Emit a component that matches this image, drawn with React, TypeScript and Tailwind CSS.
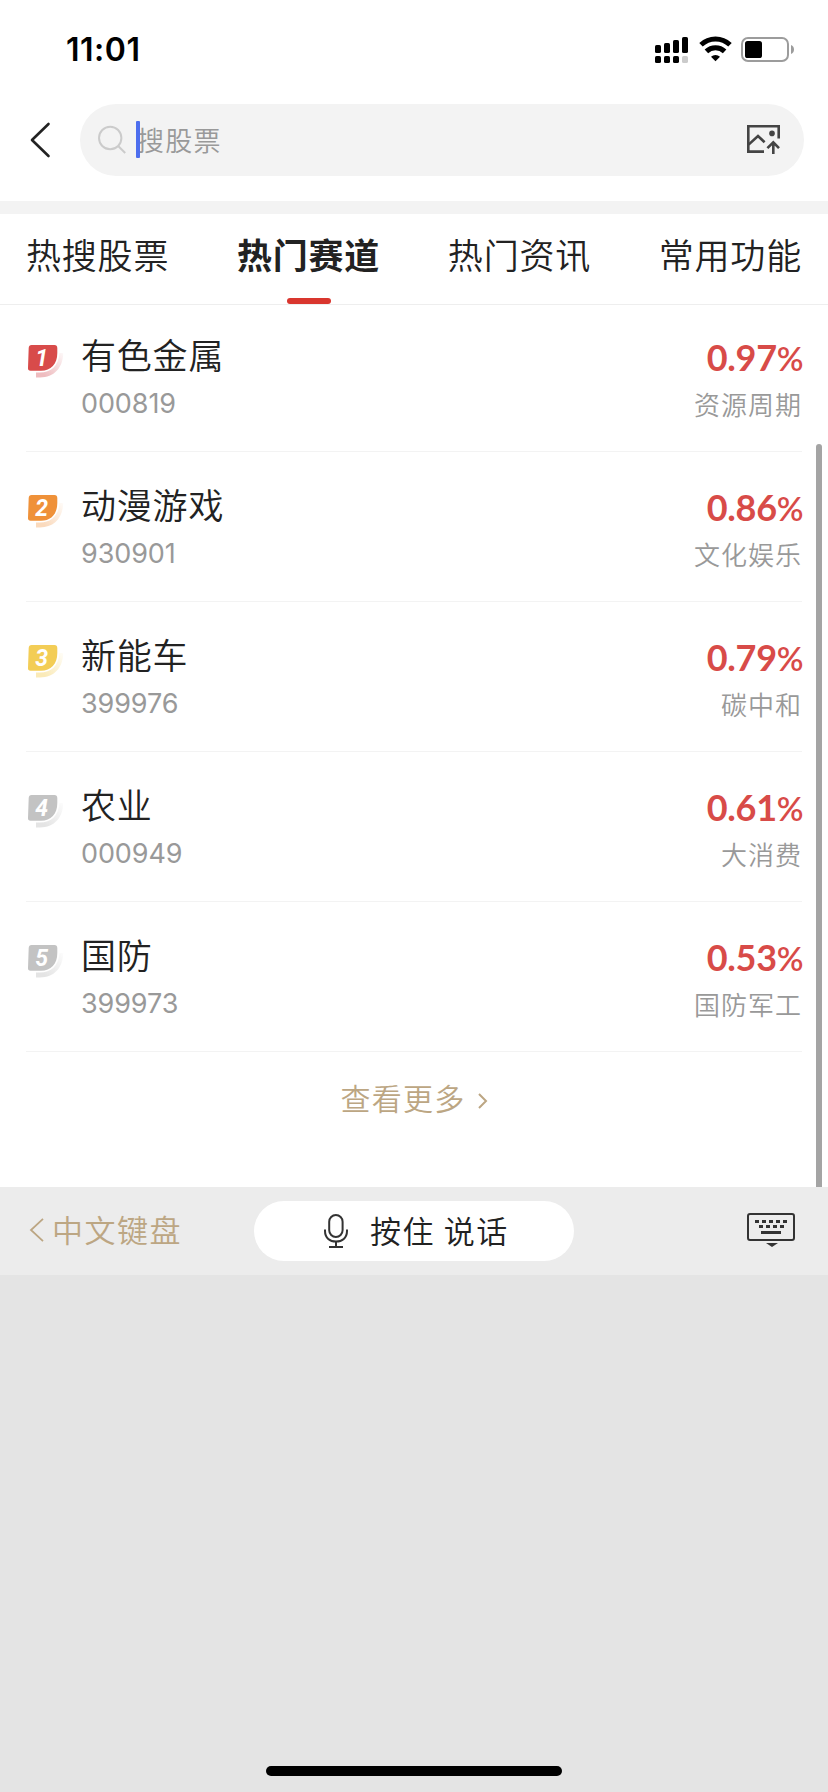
type Track = {
    name: string;
    code: string;
    change: string;
    sector: string;
    color: string;
    tail: string;
};

const tabs = ["热搜股票", "热门赛道", "热门资讯", "常用功能"];

const tracks: Track[] = [
    { name: "有色金属", code: "000819", change: "0.97", sector: "资源周期", color: "#d84b4a", tail: "#eebcbf" },
    { name: "动漫游戏", code: "930901", change: "0.86", sector: "文化娱乐", color: "#ef9139", tail: "#fadabd" },
    { name: "新能车", code: "399976", change: "0.79", sector: "碳中和", color: "#f3cd56", tail: "#faeab8" },
    { name: "农业", code: "000949", change: "0.61", sector: "大消费", color: "#c3c3c3", tail: "#e4e4e4" },
    { name: "国防", code: "399973", change: "0.53", sector: "国防军工", color: "#c3c3c3", tail: "#e4e4e4" },
];

const StatusBar = () => {
    return (
        <div className="flex h-[104px] items-start justify-between pl-[66px] pr-[34px]">
            <span className="mt-[30px] font-['Inter'] text-[32px] font-semibold leading-[40px] tracking-[0.5px] text-black">11:01</span>
            <svg className="mt-[36px]" width="140" height="28" viewBox="654 36 140 28">
                <rect x="655" y="45" width="6" height="8" rx="1.6" />
                <rect x="664" y="43" width="6" height="10" rx="1.6" />
                <rect x="673" y="40" width="6" height="13" rx="1.6" />
                <rect x="682" y="37" width="6" height="16" rx="1.6" />
                <rect x="655" y="56" width="6" height="7" rx="1.6" />
                <rect x="664" y="56" width="6" height="7" rx="1.6" />
                <rect x="673" y="56" width="6" height="7" rx="1.6" />
                <rect x="682" y="56" width="6" height="7" rx="1.6" fill="#cbcbcb" />
                <path d="M701 44.8 A21 21 0 0 1 730 44.8" fill="none" stroke="#000" strokeWidth="5" />
                <path d="M706.4 51.4 A13 13 0 0 1 724.6 51.4" fill="none" stroke="#000" strokeWidth="5" />
                <path d="M711 56.8 A6.4 6.4 0 0 1 720 56.8 L715.5 61.2 Z" />
                <rect x="742" y="38" width="46" height="23" rx="6" fill="none" stroke="#9c9c9c" strokeWidth="2" />
                <rect x="745" y="41" width="17" height="17" rx="2.6" />
                <path d="M791 45 C795 46.5 795 52.5 791 54 Z" fill="#9c9c9c" />
            </svg>
        </div>
    );
};

const SearchBar = () => {
    return (
        <div className="flex h-[72px] items-center pl-[28px] pr-6">
            <svg width="24" height="40" viewBox="0 0 24 40" fill="none" stroke="#222" strokeWidth="2.6" strokeLinecap="round" strokeLinejoin="round">
                <path d="M20.5 4 L4 20 L20.5 36" />
            </svg>
            <div className="ml-7 flex h-full flex-1 items-center rounded-full bg-[#f3f3f3] pl-[17px] pr-[23px]">
                <svg width="30" height="30" viewBox="0 0 30 30" fill="none" stroke="#cbcbcb" strokeWidth="2">
                    <circle cx="13.2" cy="13" r="11.2" />
                    <path d="M21.4 21.2 L28.2 28" />
                </svg>
                <span className="z-10 -mt-[2px] ml-[9px] h-[37px] w-1 rounded-[1px] bg-[#4d6eee]" />
                <span className="-ml-[3px] text-[27px] font-[350] leading-[40px] tracking-[1.3px] text-[#999]">搜股票</span>
                <svg className="ml-auto" width="35" height="32" viewBox="746 124 35 32" fill="none" stroke="#444" strokeWidth="2.6">
                    <path d="M778.7 138.6 V126.3 H748.3 V151.6 H764" />
                    <path d="M748.6 144.6 L758 136 L764.6 142.2" />
                    <circle cx="772" cy="133.4" r="2.8" fill="#444" stroke="none" />
                    <path d="M773.3 154 V143 M767.4 148.2 L773.3 142.3 L779 148.2" />
                </svg>
            </div>
        </div>
    );
};

const RankBadge = ({ rank, color, tail }: { rank: number; color: string; tail: string }) => {
    return (
        <svg className="mt-[42px]" width="40" height="36" viewBox="0 0 40 36">
            <defs>
                <linearGradient id={`tail-${rank}`} x1="0" y1="1" x2="1" y2="0">
                    <stop offset="0.2" stopColor={tail} />
                    <stop offset="1" stopColor={tail} stopOpacity="0.1" />
                </linearGradient>
            </defs>
            <path d="M10 28.5 H14 C25 28.5 32.5 22 33.5 9 H37.2 C37 24 28 33.4 14 33.4 H10 Z" fill={`url(#tail-${rank})`} />
            <path d="M5.6 1 H28.4 Q31.3 1 31.3 4 V9 C31.3 20 25 26.8 15 26.8 H4.6 Q1.8 26.8 2 24 L2.7 4 Q2.8 1 5.6 1 Z" fill={color} />
            <text x="15.6" y="21.6" textAnchor="middle" fill="#fff" className="font-['Roboto'] text-[23px] font-bold italic">{rank}</text>
        </svg>
    );
};

const TrackRow = ({ track, rank }: { track: Track; rank: number }) => {
    return (
        <div className="mx-[26px] flex h-[150px] border-b border-[#f3f3f3]">
            <RankBadge rank={rank} color={track.color} tail={track.tail} />
            <div className="ml-[15px] flex flex-col">
                <span className="mt-[28px] text-[35px] font-[350] leading-[48px] tracking-[0.8px] text-[#222]">{track.name}</span>
                <span className="mt-[9px] font-['Inter'] text-[27px] leading-[34px] tracking-[-0.1px] text-[#999]">{track.code}</span>
            </div>
            <div className="ml-auto flex flex-col items-end">
                <span className="-mr-[1px] mt-[32px] font-['Lato'] text-[36px] font-bold leading-[46px] tracking-[-0.3px] text-[#d84b48]">
                    {track.change}
                    <span className="text-[33px] font-semibold tracking-[-0.5px]">%</span>
                </span>
                <span className="mt-1 text-[26px] font-[350] leading-[38px] tracking-[1px] text-[#999]">{track.sector}</span>
            </div>
        </div>
    );
};

const KeyboardBar = () => {
    return (
        <div className="flex h-[88px] items-center bg-[#ececec] pl-[28px] pr-8">
            <div className="flex w-[226px] items-center text-[#bca683]">
                <svg className="-mt-[3px]" width="18" height="28" viewBox="0 0 18 28" fill="none" stroke="currentColor" strokeWidth="1.8">
                    <path d="M15 2.8 L3 14 L15 25.2" />
                </svg>
                <span className="-mt-1 ml-[6px] text-[31px] font-[350] leading-[44px] tracking-[1.5px]">中文键盘</span>
            </div>
            <div className="flex h-[60px] w-[320px] items-center rounded-full bg-white pl-[69px]">
                <svg width="26" height="36" viewBox="0 0 26 36" fill="none" stroke="#333" strokeWidth="2">
                    <rect x="6.2" y="2" width="13.4" height="22" rx="6.7" />
                    <path d="M2 16.5 V18 C2 25 7 28.6 13 28.6 S24 25 24 18 V16.5 M13 28.6 V34 M6 34 H20" />
                </svg>
                <span className="-mt-[3px] ml-[21px] text-[31px] font-[350] leading-[44px] tracking-[1.6px] text-[#222]">按住 说话</span>
            </div>
            <svg className="-mt-[3px] ml-auto" width="50" height="36" viewBox="745 1212 50 36" fill="none">
                <rect x="747" y="1214" width="46" height="26" rx="2" stroke="#333" strokeWidth="2" />
                <path d="M754 1221.5 H787" stroke="#333" strokeWidth="3" strokeDasharray="4 3" />
                <path d="M758 1226.5 H784" stroke="#333" strokeWidth="3" strokeDasharray="4 3" />
                <path d="M760 1232.5 H780" stroke="#333" strokeWidth="3" />
                <path d="M765 1243 H777 L771 1247 Z" fill="#333" />
            </svg>
        </div>
    );
};

const App = () => {
    return (
        <div className="relative flex h-[1792px] w-[828px] flex-col overflow-hidden bg-white font-['Noto_Sans_CJK_SC',sans-serif]">
            <StatusBar />
            <SearchBar />
            <div className="mt-[25px] h-[13px] bg-[#f3f3f3]" />
            <div className="flex h-[91px] justify-between border-b border-[#eee] px-[26px]">
                {tabs.map((tab, i) => (
                    <div key={tab} className="flex flex-col items-center">
                        <span className={i === 1 ? "mt-4 text-[35px] font-bold leading-[48px] tracking-[0.8px] text-[#222]" : "mt-4 text-[35px] font-[350] leading-[48px] tracking-[0.8px] text-[#222]"}>{tab}</span>
                        {i === 1 && <span className="mt-5 h-[6px] w-11 rounded-[3px] bg-[#d9362e]" />}
                    </div>
                ))}
            </div>
            <div className="-mt-[3px]">
                {tracks.map((track, i) => (
                    <TrackRow key={track.code} track={track} rank={i + 1} />
                ))}
            </div>
            <div className="flex h-[135px] justify-center pl-[2px] pt-[23px] text-[#bca683]">
                <span className="text-[30px] font-[350] leading-[44px] tracking-[1.2px]">查看更多</span>
                <svg className="ml-3 mt-[16px]" width="12" height="20" viewBox="0 0 12 20" fill="none" stroke="currentColor" strokeWidth="2">
                    <path d="M2 3 L9 10 L2 17" />
                </svg>
            </div>
            <KeyboardBar />
            <div className="flex flex-1 items-end justify-center bg-[#e4e4e4] pb-4">
                <div className="h-[10px] w-[296px] rounded-full bg-black" />
            </div>
            <div className="absolute right-[6px] top-[444px] h-[743px] w-[6px] rounded-t-[3px] bg-[#a4a4a4]" />
        </div>
    );
};

export default App;
